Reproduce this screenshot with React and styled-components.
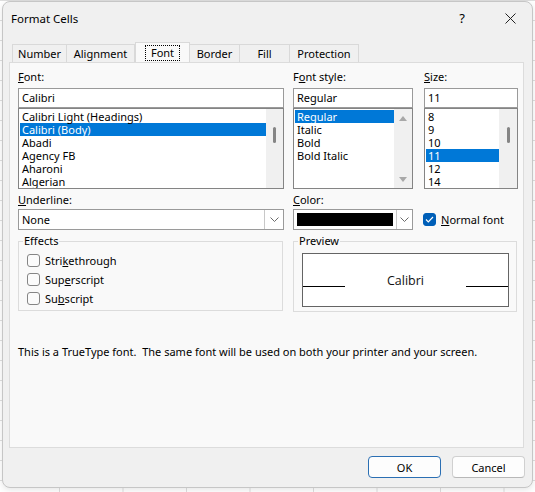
import React from "react";
import styled, { createGlobalStyle } from "styled-components";

const GlobalStyle = createGlobalStyle`
  html, body { margin: 0; padding: 0; }
  body {
    width: 535px;
    height: 492px;
    overflow: hidden;
    background-color: #fff;
    background-image:
      linear-gradient(to right, #dedede 1px, transparent 1px),
      linear-gradient(to bottom, #dedede 1px, transparent 1px);
    background-size: 63.5px 20px;
    background-position: 59px 0;
    font-family: "Noto Sans", "Open Sans", sans-serif;
    font-size: 11px;
    color: #000;
  }
`;

const Dialog = styled.div`
  box-sizing: border-box;
  margin: 1px 0 0 2px;
  width: 531px;
  height: 487px;
  background: #f0f0f0;
  border: 1px solid #c6c6c6;
  border-radius: 8px;
  box-shadow: 0 2px 6px rgba(0, 0, 0, 0.1);
  display: flex;
  flex-direction: column;
  overflow: hidden;
`;

const TitleBar = styled.div`
  height: 32px;
  display: flex;
  align-items: center;
  padding-left: 8px;
  font-size: 11.5px;
`;

const Title = styled.div`
  flex: 1;
`;

const TitleButton = styled.div`
  width: ${(p) => p.$w}px;
  height: 32px;
  display: flex;
  align-items: center;
  justify-content: center;
  font-size: 13px;
`;

const TabStrip = styled.div`
  margin-top: 8px;
  height: 20px;
  padding-left: 9px;
  display: flex;
  align-items: flex-end;
`;

const Tab = styled.div`
  box-sizing: border-box;
  width: ${(p) => p.$w}px;
  height: ${(p) => (p.$active ? 20 : 18)}px;
  border: 1px solid #d9d9d9;
  border-bottom: none;
  border-left-width: ${(p) => (p.$first || p.$active ? 1 : 0)}px;
  background: ${(p) => (p.$active ? "#f9f9f9" : "#f0f0f0")};
  display: flex;
  align-items: center;
  justify-content: center;
  line-height: 14px;
`;

const FocusLabel = styled.span`
  border: 1px dotted #000;
  padding: 0 5px;
  line-height: 14px;
`;

const Panel = styled.div`
  box-sizing: border-box;
  margin: 0 8px 0 6px;
  height: 386px;
  background: #f9f9f9;
  border: 1px solid #dcdcdc;
  padding: 7px 0 0 8px;
`;

const Row = styled.div`
  display: flex;
  gap: ${(p) => p.$gap || 0}px;
  margin-top: ${(p) => p.$mt || 0}px;
  align-items: ${(p) => p.$align || "stretch"};
`;

const Column = styled.div`
  width: ${(p) => p.$w}px;
  margin-left: ${(p) => p.$ml || 0}px;
  display: flex;
  flex-direction: column;
`;

const Label = styled.div`
  height: 14px;
  line-height: 14px;
  margin-bottom: ${(p) => p.$mb}px;
`;

const Mn = styled.span`
  text-decoration: underline;
  text-underline-offset: 1px;
`;

const TextBox = styled.div`
  box-sizing: border-box;
  height: 20px;
  border: 1px solid #9a9a9a;
  background: #fff;
  padding: 0 3px;
  line-height: 18px;
`;

const List = styled.div`
  box-sizing: border-box;
  height: 81px;
  border: 1px solid #848484;
  background: #fff;
  display: flex;
`;

const Items = styled.div`
  flex: 1;
  padding: 1px 0 0 1px;
  overflow: hidden;
`;

const Item = styled.div`
  height: 13px;
  line-height: 13px;
  padding-left: 2px;
  white-space: nowrap;
  background: ${(p) => (p.$sel ? "#0078d7" : "transparent")};
  color: ${(p) => (p.$sel ? "#fff" : "#000")};
`;

const Track = styled.div`
  width: ${(p) => p.$w}px;
  background: #f0f0f0;
  display: flex;
  flex-direction: column;
  align-items: center;
  justify-content: ${(p) => (p.$arrows ? "space-between" : "flex-start")};
  padding: ${(p) => (p.$arrows ? "7px 0 6px" : "18px 0 0")};
  box-sizing: border-box;
`;

const Thumb = styled.div`
  width: 3px;
  height: 16px;
  border-radius: 1.5px;
  background: #858585;
`;

const Arrow = styled.div`
  width: 0;
  height: 0;
  border-left: 4.5px solid transparent;
  border-right: 4.5px solid transparent;
  ${(p) =>
    p.$down
      ? "border-top: 5px solid #a8a8a8;"
      : "border-bottom: 5px solid #a8a8a8;"}
`;

const Select = styled.div`
  box-sizing: border-box;
  width: ${(p) => p.$w}px;
  height: 21px;
  border: 1px solid #9a9a9a;
  background: #fff;
  display: flex;
`;

const SelectValue = styled.div`
  flex: 1;
  padding: 0 3px;
  line-height: 19px;
  display: flex;
  align-items: center;
`;

const Swatch = styled.div`
  width: 96px;
  height: 13px;
  background: #000;
`;

const ArrowButton = styled.div`
  width: 18px;
  border-left: 1px solid #c8c8c8;
  display: flex;
  align-items: center;
  justify-content: center;
`;

const CheckRow = styled.div`
  display: flex;
  align-items: center;
  gap: 5px;
  height: 13px;
  line-height: 13px;
`;

const Box = styled.div`
  box-sizing: border-box;
  width: 13px;
  height: 13px;
  border-radius: 3px;
  border: 1px solid ${(p) => (p.$checked ? "#005fb8" : "#858585")};
  background: ${(p) => (p.$checked ? "#005fb8" : "#fbfbfb")};
  display: flex;
  align-items: center;
  justify-content: center;
`;

const Group = styled.fieldset`
  box-sizing: border-box;
  width: ${(p) => p.$w}px;
  margin: ${(p) => p.$mt}px 0 0;
  border: 1px solid #dcdcdc;
  padding: ${(p) => p.$pad};
  min-width: 0;
  display: flex;
  flex-direction: column;
  gap: 6px;
`;

const Legend = styled.legend`
  padding: 0 1px;
  margin-left: -4px;
  line-height: 14px;
`;

const PreviewBox = styled.div`
  box-sizing: border-box;
  height: 54px;
  border: 1px solid #646464;
  background: #fff;
  display: flex;
  align-items: flex-start;
`;

const PreviewLine = styled.div`
  width: 42px;
  height: 1px;
  margin-top: 32px;
  background: #000;
`;

const PreviewText = styled.div`
  flex: 1;
  text-align: center;
  margin-top: 19px;
  font-family: "Open Sans", "Noto Sans", sans-serif;
  font-size: 12.5px;
  line-height: 16px;
  color: #111;
`;

const Note = styled.div`
  margin-top: 33px;
  line-height: 14px;
  white-space: nowrap;
`;

const Footer = styled.div`
  display: flex;
  justify-content: flex-end;
  gap: 11px;
  padding: 8px 7px 0 0;
`;

const Button = styled.div`
  box-sizing: border-box;
  width: 73px;
  height: 22px;
  border-radius: 4px;
  background: #fdfdfd;
  border: 1px solid ${(p) => (p.$default ? "#2b6fb3" : "#d0d0d0")};
  border-bottom-color: ${(p) => (p.$default ? "#2b6fb3" : "#b8b8b8")};
  display: flex;
  align-items: center;
  justify-content: center;
`;

const Chevron = () => (
  <svg width="9" height="5" viewBox="0 0 9 5">
    <polyline points="0.5,0.5 4.5,4.5 8.5,0.5" fill="none" stroke="#6a6a6a" strokeWidth="1" />
  </svg>
);

const fonts = ["Calibri Light (Headings)", "Calibri (Body)", "Abadi", "Agency FB", "Aharoni", "Algerian"];
const styles = ["Regular", "Italic", "Bold", "Bold Italic"];
const sizes = ["8", "9", "10", "11", "12", "14"];
const tabs = [
  ["Number", 55],
  ["Alignment", 68],
  ["Font", 55],
  ["Border", 50],
  ["Fill", 50],
  ["Protection", 69],
];

export default function App() {
  return (
    <>
      <GlobalStyle />
      <Dialog>
        <TitleBar>
          <Title>Format Cells</Title>
          <TitleButton $w={52}>?</TitleButton>
          <TitleButton $w={44}>
            <svg width="11" height="11" viewBox="0 0 11 11">
              <path d="M0.5 0.5 L10.5 10.5 M10.5 0.5 L0.5 10.5" stroke="#222" strokeWidth="1" />
            </svg>
          </TitleButton>
        </TitleBar>

        <TabStrip>
          {tabs.map(([name, w], i) => (
            <Tab key={name} $w={w} $first={i === 0} $active={name === "Font"}>
              {name === "Font" ? <FocusLabel>Font</FocusLabel> : name}
            </Tab>
          ))}
        </TabStrip>

        <Panel>
          <Row>
            <Column $w={266}>
              <Label $mb={4}><Mn>F</Mn>ont:</Label>
              <TextBox>Calibri</TextBox>
              <List>
                <Items>
                  {fonts.map((f) => (
                    <Item key={f} $sel={f === "Calibri (Body)"}>{f}</Item>
                  ))}
                </Items>
                <Track $w={17}><Thumb /></Track>
              </List>
            </Column>
            <Column $w={120} $ml={9}>
              <Label $mb={4}>F<Mn>o</Mn>nt style:</Label>
              <TextBox>Regular</TextBox>
              <List>
                <Items>
                  {styles.map((s) => (
                    <Item key={s} $sel={s === "Regular"}>{s}</Item>
                  ))}
                </Items>
                <Track $w={18} $arrows>
                  <Arrow />
                  <Arrow $down />
                </Track>
              </List>
            </Column>
            <Column $w={94} $ml={11}>
              <Label $mb={4}><Mn>S</Mn>ize:</Label>
              <TextBox>11</TextBox>
              <List>
                <Items>
                  {sizes.map((s) => (
                    <Item key={s} $sel={s === "11"}>{s}</Item>
                  ))}
                </Items>
                <Track $w={18}><Thumb /></Track>
              </List>
            </Column>
          </Row>

          <Row $mt={4} $gap={9}>
            <Column $w={266}>
              <Label $mb={2}><Mn>U</Mn>nderline:</Label>
              <Select $w={266}>
                <SelectValue>None</SelectValue>
                <ArrowButton><Chevron /></ArrowButton>
              </Select>
              <Group $w={265} $mt={4} $pad="6px 0 5px 8px">
                <Legend>Effects</Legend>
                <CheckRow><Box /><span>Stri<Mn>k</Mn>ethrough</span></CheckRow>
                <CheckRow><Box /><span>Sup<Mn>e</Mn>rscript</span></CheckRow>
                <CheckRow><Box /><span>Su<Mn>b</Mn>script</span></CheckRow>
              </Group>
            </Column>
            <Column $w={224}>
              <Label $mb={2}><Mn>C</Mn>olor:</Label>
              <Row $gap={10} $align="center">
                <Select $w={120}>
                  <SelectValue><Swatch /></SelectValue>
                  <ArrowButton><Chevron /></ArrowButton>
                </Select>
                <CheckRow>
                  <Box $checked>
                    <svg width="9" height="7" viewBox="0 0 9 7">
                      <polyline points="1,3.5 3.3,5.8 8,1" fill="none" stroke="#fff" strokeWidth="1.2" />
                    </svg>
                  </Box>
                  <span><Mn>N</Mn>ormal font</span>
                </CheckRow>
              </Row>
              <Group $w={224} $mt={4} $pad="5px 7px 4px 8px">
                <Legend>Preview</Legend>
                <PreviewBox>
                  <PreviewLine />
                  <PreviewText>Calibri</PreviewText>
                  <PreviewLine />
                </PreviewBox>
              </Group>
            </Column>
          </Row>

          <Note>This is a TrueType font.&nbsp; The same font will be used on both your printer and your screen.</Note>
        </Panel>

        <Footer>
          <Button $default>OK</Button>
          <Button>Cancel</Button>
        </Footer>
      </Dialog>
    </>
  );
}
